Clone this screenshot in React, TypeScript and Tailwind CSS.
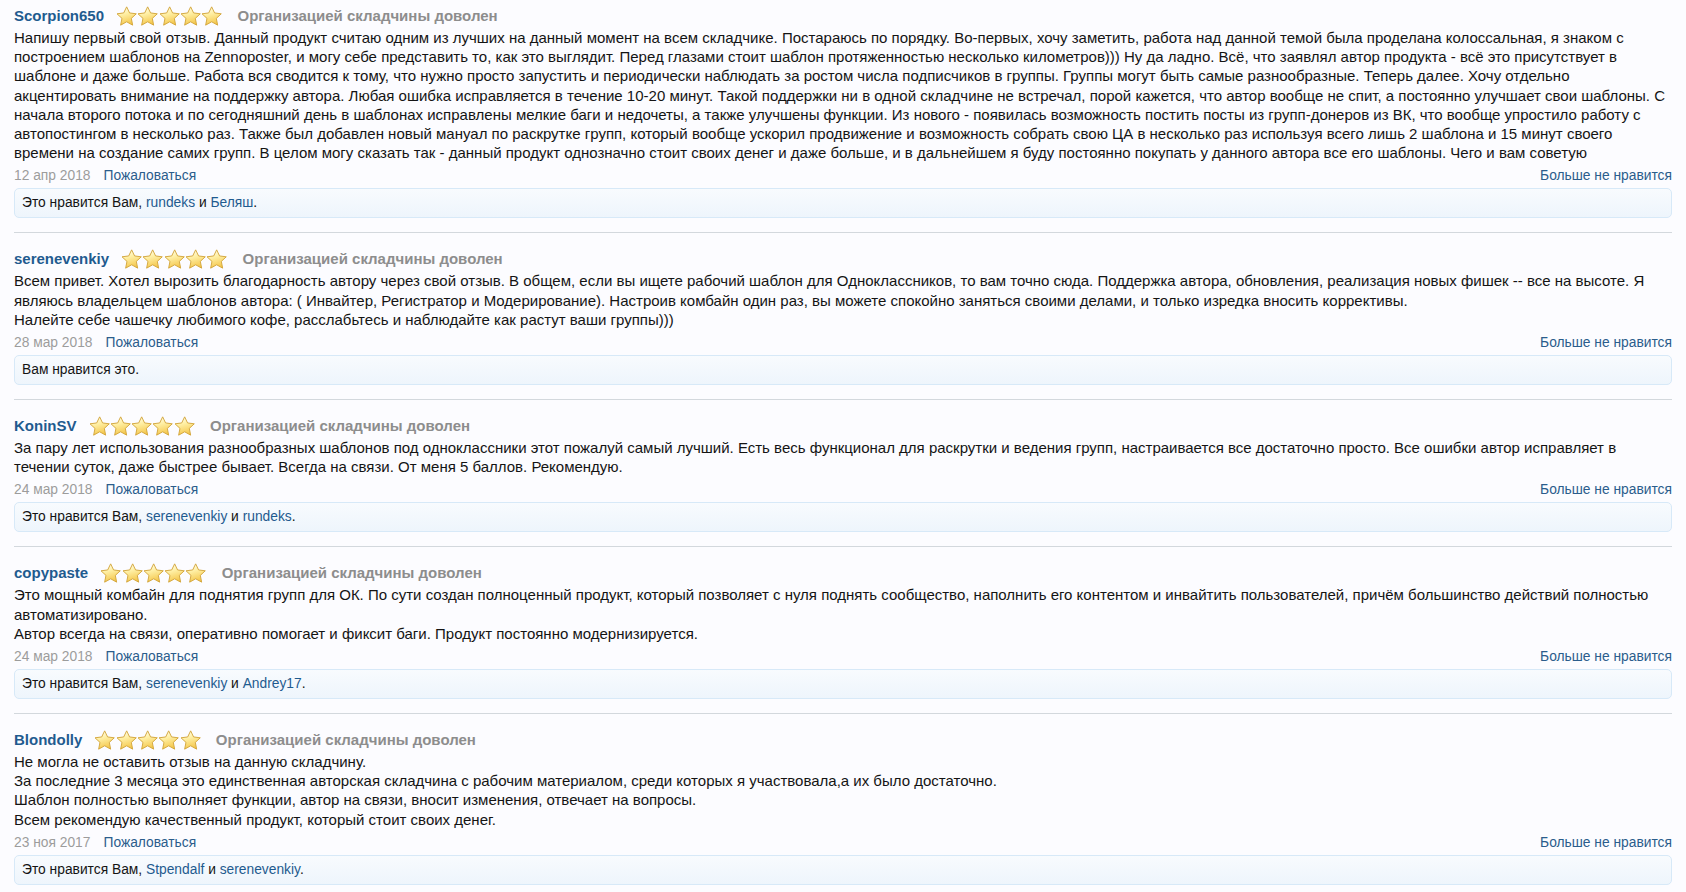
import React, { useId } from 'react'

type Review = {
  name: string
  text: string[]
  date: string
  likes: React.ReactNode
}

const Link = ({ children }: { children: React.ReactNode }) => (
  <a href="#" className="text-[#1f5b8f]">{children}</a>
)

const reviews: Review[] = [
  {
    name: 'Scorpion650',
    text: [
      'Напишу первый свой отзыв. Данный продукт считаю одним из лучших на данный момент на всем складчике. Постараюсь по порядку. Во-первых, хочу заметить, работа над данной темой была проделана колоссальная, я знаком с построением шаблонов на Zennoposter, и могу себе представить то, как это выглядит. Перед глазами стоит шаблон протяженностью несколько километров))) Ну да ладно. Всё, что заявлял автор продукта - всё это присутствует в шаблоне и даже больше. Работа вся сводится к тому, что нужно просто запустить и периодически наблюдать за ростом числа подписчиков в группы. Группы могут быть самые разнообразные. Теперь далее. Хочу отдельно акцентировать внимание на поддержку автора. Любая ошибка исправляется в течение 10-20 минут. Такой поддержки ни в одной складчине не встречал, порой кажется, что автор вообще не спит, а постоянно улучшает свои шаблоны. С начала второго потока и по сегодняшний день в шаблонах исправлены мелкие баги и недочеты, а также улучшены функции. Из нового - появилась возможность постить посты из групп-донеров из ВК, что вообще упростило работу с автопостингом в несколько раз. Также был добавлен новый мануал по раскрутке групп, который вообще ускорил продвижение и возможность собрать свою ЦА в несколько раз используя всего лишь 2 шаблона и 15 минут своего времени на создание самих групп. В целом могу сказать так - данный продукт однозначно стоит своих денег и даже больше, и в дальнейшем я буду постоянно покупать у данного автора все его шаблоны. Чего и вам советую',
    ],
    date: '12 апр 2018',
    likes: <>Это нравится Вам, <Link>rundeks</Link> и <Link>Беляш</Link>.</>,
  },
  {
    name: 'serenevenkiy',
    text: [
      'Всем привет. Хотел вырозить благодарность автору через свой отзыв. В общем, если вы ищете рабочий шаблон для Одноклассников, то вам точно сюда. Поддержка автора, обновления, реализация новых фишек -- все на высоте. Я являюсь владельцем шаблонов автора: ( Инвайтер, Регистратор и Модерирование). Настроив комбайн один раз, вы можете спокойно заняться своими делами, и только изредка вносить коррективы.',
      'Налейте себе чашечку любимого кофе, расслабьтесь и наблюдайте как растут ваши группы)))',
    ],
    date: '28 мар 2018',
    likes: <>Вам нравится это.</>,
  },
  {
    name: 'KoninSV',
    text: [
      'За пару лет использования разнообразных шаблонов под одноклассники этот пожалуй самый лучший. Есть весь функционал для раскрутки и ведения групп, настраивается все достаточно просто. Все ошибки автор исправляет в течении суток, даже быстрее бывает. Всегда на связи. От меня 5 баллов. Рекомендую.',
    ],
    date: '24 мар 2018',
    likes: <>Это нравится Вам, <Link>serenevenkiy</Link> и <Link>rundeks</Link>.</>,
  },
  {
    name: 'copypaste',
    text: [
      'Это мощный комбайн для поднятия групп для ОК. По сути создан полноценный продукт, который позволяет с нуля поднять сообщество, наполнить его контентом и инвайтить пользователей, причём большинство действий полностью автоматизировано.',
      'Автор всегда на связи, оперативно помогает и фиксит баги. Продукт постоянно модернизируется.',
    ],
    date: '24 мар 2018',
    likes: <>Это нравится Вам, <Link>serenevenkiy</Link> и <Link>Andrey17</Link>.</>,
  },
  {
    name: 'Blondolly',
    text: [
      'Не могла не оставить отзыв на данную складчину.',
      'За последние 3 месяца это единственная авторская складчина с рабочим материалом, среди которых я участвовала,а их было достаточно.',
      'Шаблон полностью выполняет функции, автор на связи, вносит изменения, отвечает на вопросы.',
      'Всем рекомендую качественный продукт, который стоит своих денег.',
    ],
    date: '23 ноя 2017',
    likes: <>Это нравится Вам, <Link>Stpendalf</Link> и <Link>serenevenkiy</Link>.</>,
  },
]

function Star() {
  const id = useId()
  return (
    <svg className="h-[20px] w-[21.3px]" viewBox="0 0 22 21">
      <defs>
        <linearGradient id={id} x1="0.2" y1="0" x2="0.5" y2="1">
          <stop offset="0" stopColor="#fffef4" />
          <stop offset="0.4" stopColor="#fff0a6" />
          <stop offset="1" stopColor="#f4c64a" />
        </linearGradient>
      </defs>
      <path
        d="M11 0.9L14.1 7.3L21.1 8.2L15.9 13L17.3 20.1L11 16.6L4.7 20.1L6.1 13L0.9 8.2L7.9 7.3Z"
        fill={`url(#${id})`}
        stroke="#d3a53c"
        strokeWidth="1"
        strokeLinejoin="round"
      />
    </svg>
  )
}

function ReviewItem({ review, first }: { review: Review; first: boolean }) {
  return (
    <li className={first ? 'border-b border-[#d3d8dd] pt-[5px] pb-[14px]' : 'border-b border-[#d3d8dd] pt-[15px] pb-[14px]'}>
      <div className="flex h-[22px] items-center">
        <span className="font-bold text-[#1f5b8f]">{review.name}</span>
        <span className="ml-[12px] flex">
          {[0, 1, 2, 3, 4].map(i => <Star key={i} />)}
        </span>
        <span className="ml-[15px] font-bold text-[#8d8d8d]">Организацией складчины доволен</span>
      </div>

      <div className="mt-px leading-[19.2px]">
        {review.text.map((p, i) => <div key={i}>{p}</div>)}
      </div>

      <div className="mt-[4px] flex justify-between text-[13.8px] leading-[19px]">
        <div>
          <span className="text-[#9c9c9c]">{review.date}</span>
          <a href="#" className="ml-[13px] text-[#2b5d8c]">Пожаловаться</a>
        </div>
        <a href="#" className="text-[#2b5d8c]">Больше не нравится</a>
      </div>

      <div className="mt-[3px] flex h-[30px] items-center rounded-[5px] border border-[#d7e9f8] bg-linear-to-b from-[#f8fbfe] to-[#eef5fc] px-[7px] text-[13.8px]">
        <span>{review.likes}</span>
      </div>
    </li>
  )
}

export default function App() {
  return (
    <div className="min-h-screen overflow-hidden bg-[#fcfcff] px-[14px] font-['Liberation_Sans',Arial,sans-serif] text-[15px] text-[#141414]">
      <ol>
        {reviews.map((r, i) => <ReviewItem key={i} review={r} first={i === 0} />)}
      </ol>
    </div>
  )
}
